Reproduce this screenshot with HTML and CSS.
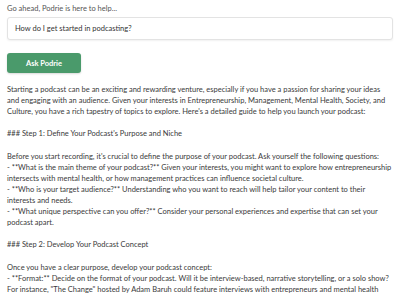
FILE: index.html
```html
<!DOCTYPE html>
<html lang="en">
<head>
    <meta charset="UTF-8">
    <meta name="viewport" content="width=device-width, initial-scale=1.0">
    <title>Ask Podrie</title>
    <link rel="stylesheet" href="styles.css">
</head>
<body>
    <div class="ask-box">
        <p class="prompt">Go ahead, Podrie is here to help...</p>
        <input type="text" class="question" value="How do I get started in podcasting?">
        <button type="button" class="ask-btn">Ask Podrie</button>
    </div>

    <div class="answer">Starting a podcast can be an exciting and rewarding venture, especially if you have a passion for sharing your ideas and engaging with an audience. Given your interests in Entrepreneurship, Management, Mental Health, Society, and Culture, you have a rich tapestry of topics to explore. Here's a detailed guide to help you launch your podcast:

### Step 1: Define Your Podcast's Purpose and Niche

Before you start recording, it's crucial to define the purpose of your podcast. Ask yourself the following questions:
- **What is the main theme of your podcast?** Given your interests, you might want to explore how entrepreneurship intersects with mental health, or how management practices can influence societal culture.
- **Who is your target audience?** Understanding who you want to reach will help tailor your content to their interests and needs.
- **What unique perspective can you offer?** Consider your personal experiences and expertise that can set your podcast apart.

### Step 2: Develop Your Podcast Concept

Once you have a clear purpose, develop your podcast concept:
- **Format:** Decide on the format of your podcast. Will it be interview-based, narrative storytelling, or a solo show? For instance, "The Change" hosted by Adam Baruh could feature interviews with entrepreneurs and mental health</div>
</body>
</html>
```

FILE: styles.css
```css
body {
    font-family: Lato, "Open Sans", sans-serif;
    margin: 0;
    padding: 3px 7px;
    background-color: #ffffff;
    color: #3a3a3a;
}

.ask-box {
    display: flex;
    flex-direction: column;
    align-items: flex-start;
}

.prompt {
    margin: 0 0 3px 0;
    font-size: 7.5px;
    line-height: 11px;
    color: #555;
}

.question {
    box-sizing: border-box;
    width: 100%;
    height: 23px;
    padding: 0 7px;
    border: 1px solid #e3e3e3;
    border-radius: 3px;
    box-shadow: 0 1px 2px rgba(0, 0, 0, 0.06);
    font-family: Lato, sans-serif;
    font-size: 7.5px;
    color: #333;
}

.ask-btn {
    margin-top: 13px;
    width: 74px;
    height: 20px;
    background-color: #4a9a6b;
    border: none;
    border-radius: 3px;
    box-shadow: 0 1px 2px rgba(0, 0, 0, 0.15);
    color: white;
    font-family: Lato, sans-serif;
    font-weight: bold;
    font-size: 7.5px;
    cursor: pointer;
}

.ask-btn:hover {
    background-color: #3f8a5e;
}

.answer {
    margin-top: 11px;
    white-space: pre-line;
    font-size: 7.5px;
    line-height: 11.1px;
    color: #3a3a3a;
}
```
